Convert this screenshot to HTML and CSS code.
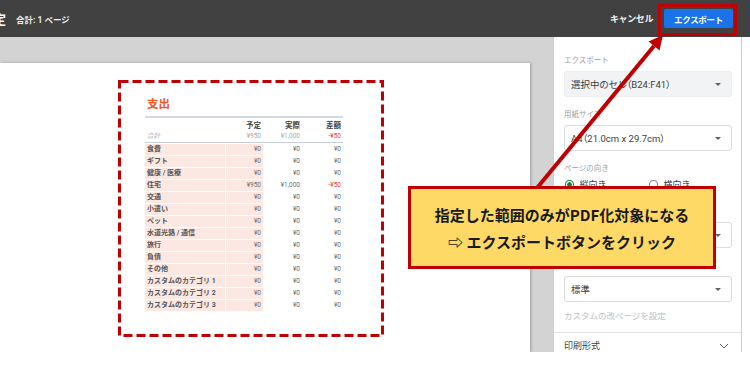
FILE: index.html
```html
<!DOCTYPE html>
<html lang="ja">
<head>
    <meta charset="UTF-8">
    <title>印刷設定</title>
    <link rel="stylesheet" href="styles.css">
</head>
<body>
<div class="app">

    <header class="topbar">
        <span class="title">印刷設定</span>
        <span class="pages">合計: 1 ページ</span>
        <span class="spacer"></span>
        <span class="cancel">キャンセル</span>
        <span class="mark"><span class="export-btn">エクスポート</span></span>
    </header>

    <div class="main">
        <div class="preview">
            <div class="page">
                <div class="range">
                    <svg class="dash" width="266" height="257" viewBox="0 0 266 257">
                        <rect x="1.5" y="1.5" width="263" height="254" fill="none" stroke="#c00000" stroke-width="3" stroke-dasharray="9 4"/>
                    </svg>
                    <div class="sheet">
                        <div class="sheet-title">支出</div>
                        <div class="row head"><span></span><span>予定</span><span>実際</span><span>差額</span></div>
                        <div class="row total"><span>合計</span><span>¥950</span><span>¥1,000</span><span class="neg">-¥50</span></div>
                        <div class="row"><span>食費</span><span>¥0</span><span>¥0</span><span>¥0</span></div>
                        <div class="row"><span>ギフト</span><span>¥0</span><span>¥0</span><span>¥0</span></div>
                        <div class="row"><span>健康 / 医療</span><span>¥0</span><span>¥0</span><span>¥0</span></div>
                        <div class="row"><span>住宅</span><span>¥950</span><span>¥1,000</span><span class="neg">-¥50</span></div>
                        <div class="row"><span>交通</span><span>¥0</span><span>¥0</span><span>¥0</span></div>
                        <div class="row"><span>小遣い</span><span>¥0</span><span>¥0</span><span>¥0</span></div>
                        <div class="row"><span>ペット</span><span>¥0</span><span>¥0</span><span>¥0</span></div>
                        <div class="row"><span>水道光熱 / 通信</span><span>¥0</span><span>¥0</span><span>¥0</span></div>
                        <div class="row"><span>旅行</span><span>¥0</span><span>¥0</span><span>¥0</span></div>
                        <div class="row"><span>負債</span><span>¥0</span><span>¥0</span><span>¥0</span></div>
                        <div class="row"><span>その他</span><span>¥0</span><span>¥0</span><span>¥0</span></div>
                        <div class="row"><span>カスタムのカテゴリ 1</span><span>¥0</span><span>¥0</span><span>¥0</span></div>
                        <div class="row"><span>カスタムのカテゴリ 2</span><span>¥0</span><span>¥0</span><span>¥0</span></div>
                        <div class="row"><span>カスタムのカテゴリ 3</span><span>¥0</span><span>¥0</span><span>¥0</span></div>
                    </div>
                </div>
            </div>
        </div>

        <aside class="panel">
            <div class="fields">
                <div class="field">
                    <div class="label">エクスポート</div>
                    <div class="select filled"><span>選択中のセル（B24:F41）</span><i class="caret"></i></div>
                </div>
                <div class="field">
                    <div class="label">用紙サイズ</div>
                    <div class="select"><span>A4（21.0cm x 29.7cm）</span><i class="caret"></i></div>
                </div>
                <div class="field radios">
                    <div class="label">ページの向き</div>
                    <div class="radio-row">
                        <span class="radio on"></span><span class="radio-text">縦向き</span>
                        <span class="radio"></span><span class="radio-text">横向き</span>
                    </div>
                </div>
                <div class="field">
                    <div class="label">スケール</div>
                    <div class="select"><span>標準（100%）</span><i class="caret"></i></div>
                </div>
                <div class="field">
                    <div class="label">余白</div>
                    <div class="select"><span>標準</span><i class="caret"></i></div>
                </div>
                <div class="link">カスタムの改ページを設定</div>
            </div>
            <div class="section">
                <span>印刷形式</span>
                <svg width="10" height="6" viewBox="0 0 10 6"><polyline points="1,1 5,5 9,1" fill="none" stroke="#5f6368" stroke-width="1"/></svg>
            </div>
        </aside>
    </div>

    <svg class="arrow" width="750" height="376" viewBox="0 0 750 376">
        <line x1="537" y1="188" x2="654" y2="46" stroke="#c00000" stroke-width="4"/>
        <polygon points="663,35 659.5,50.5 648.5,41.5" fill="#c00000"/>
    </svg>

    <div class="callout">
        <div>指定した範囲のみがPDF化対象になる</div>
        <div>⇨ エクスポートボタンをクリック</div>
    </div>

</div>
</body>
</html>
```

FILE: styles.css
```css
body {
    margin: 0;
    background: #fff;
    font-family: Roboto, "Noto Sans CJK JP", sans-serif;
}

.app {
    position: relative;
    width: 750px;
    height: 376px;
    overflow: hidden;
    background: #fff;
}

/* top bar */

.topbar {
    display: flex;
    align-items: center;
    height: 37px;
    padding-right: 13px;
    background: #414141;
    color: #fff;
    white-space: nowrap;
}

.title {
    margin-left: -46px;
    font-size: 13px;
    font-weight: bold;
}

.pages {
    margin-left: 10px;
    font-size: 8.5px;
    font-weight: bold;
    color: #eee;
}

.spacer {
    flex: 1;
}

.cancel {
    margin-right: 5px;
    font-size: 9px;
    font-weight: bold;
    letter-spacing: -0.4px;
    color: #f1f1f1;
}

.mark {
    margin-top: 3px;
    padding: 2px 1px 5px 3px;
    border: 3px solid #c00000;
}

.export-btn {
    display: flex;
    align-items: center;
    justify-content: center;
    width: 69px;
    height: 19px;
    border-radius: 2px;
    background: #1a73e8;
    font-size: 8.5px;
    font-weight: bold;
    letter-spacing: -0.3px;
}

/* preview */

.main {
    display: flex;
    height: 315px;
    overflow: hidden;
}

.preview {
    width: 530px;
    padding: 26px 23px 0 0;
    background: #d3d3d3;
}

.page {
    height: 289px;
    padding: 17px 0 0 118px;
    box-sizing: border-box;
    background: #fff;
    box-shadow: 1px 0 3px rgba(0, 0, 0, 0.25);
}

.range {
    position: relative;
    width: 266px;
    height: 257px;
    padding: 17px 0 0 27px;
    box-sizing: border-box;
}

.dash {
    position: absolute;
    left: 0;
    top: 0;
}

.sheet {
    width: 198px;
    color: #555;
}

.sheet-title {
    height: 19px;
    padding-left: 2px;
    border-bottom: 2px solid #d5d9e3;
    font-size: 11.5px;
    font-weight: bold;
    line-height: 14px;
    color: #f4511e;
}

.row {
    display: grid;
    grid-template-columns: 80px 38px 39px 41px;
    height: 12px;
    font-size: 6.5px;
    line-height: 11px;
}

.row span {
    padding-right: 2px;
    text-align: right;
    color: #6f6f6f;
    white-space: nowrap;
}

.row span:first-child {
    padding-left: 2px;
    text-align: left;
    font-weight: bold;
    font-size: 7px;
    color: #555;
}

.row span:nth-child(-n+2) {
    background: #fce8e2;
    border-bottom: 1px solid #fff;
}

.row span:nth-child(2) {
    border-left: 1px solid #fff;
}

.row .neg {
    color: #e53935;
}

.row.head {
    height: 11px;
    margin-top: 2px;
    font-size: 7.5px;
    line-height: 11px;
}

.row.head span,
.row.total span {
    background: none;
    border: none;
}

.row.head span {
    font-weight: bold;
    color: #444;
}

.row.total {
    height: 11px;
    margin-bottom: 1px;
    border-bottom: 1px solid #c9cdd8;
    line-height: 11px;
}

.row.total span {
    color: #aaa;
}

.row.total span:first-child {
    font-style: italic;
    font-weight: normal;
    font-size: 6.5px;
    color: #aaa;
}

.row.total .neg {
    color: #e53935;
}

/* side panel */

.panel {
    width: 189px;
    border-left: 1px solid #d0d0d0;
    border-right: 1px solid #cfcfcf;
    background: #fff;
    box-sizing: border-box;
}

.fields {
    padding: 19px 9px 11px 10px;
}

.field {
    margin-bottom: 13px;
}

.label {
    height: 10px;
    margin-bottom: 5px;
    font-size: 7.5px;
    line-height: 10px;
    color: #9aa0a6;
}

.select {
    display: flex;
    align-items: center;
    justify-content: space-between;
    height: 26px;
    padding: 0 10px 0 6px;
    box-sizing: border-box;
    border: 1px solid #dadce0;
    border-radius: 3px;
    font-size: 9.5px;
    color: #3c4043;
    font-feature-settings: "palt";
}

.select.filled {
    background: #f1f3f4;
    border-color: #eceef0;
}

.caret {
    border-left: 3px solid transparent;
    border-right: 3px solid transparent;
    border-top: 3px solid #5f6368;
}

.radios {
    margin-bottom: 17px;
}

.radios .label {
    margin-bottom: 4px;
}

.radio-row {
    display: flex;
    align-items: center;
    height: 12px;
}

.radio {
    width: 9px;
    height: 9px;
    margin-left: 1px;
    box-sizing: border-box;
    border: 1.5px solid #80868b;
    border-radius: 50%;
}

.radio.on {
    border-color: #188038;
    background: radial-gradient(circle, #188038 2px, transparent 2.5px);
}

.radio-text {
    width: 73px;
    margin-left: 6px;
    font-size: 9px;
    color: #3c4043;
}

.link {
    height: 10px;
    margin-top: -4px;
    font-size: 8.5px;
    line-height: 10px;
    color: #bdc1c6;
}

.section {
    display: flex;
    align-items: center;
    justify-content: space-between;
    padding: 8px 12px 0 10px;
    border-top: 1px solid #e0e0e0;
    font-size: 9px;
    line-height: 10px;
    color: #3c4043;
}

/* annotations */

.arrow {
    position: absolute;
    left: 0;
    top: 0;
    pointer-events: none;
}

.callout {
    position: absolute;
    left: 408px;
    top: 186px;
    width: 308px;
    height: 83px;
    box-sizing: border-box;
    display: flex;
    flex-direction: column;
    justify-content: center;
    border: 3px solid #c00000;
    background: #ffd966;
    font-family: "Noto Sans CJK JP", sans-serif;
    font-size: 15px;
    font-weight: bold;
    line-height: 27px;
    text-align: center;
    color: #1a1a1a;
}
```
